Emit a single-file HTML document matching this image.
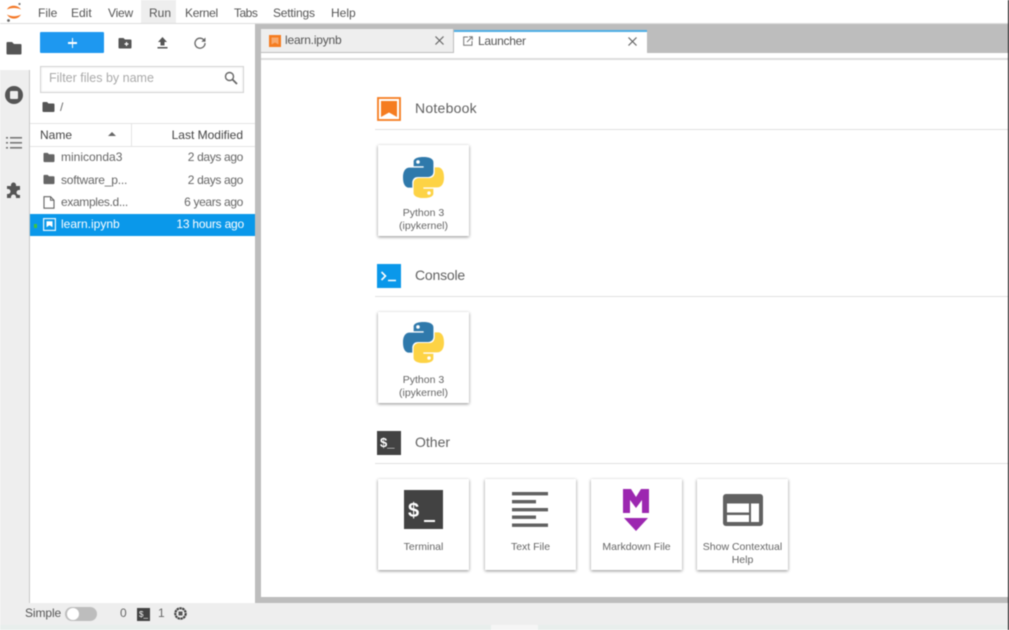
<!DOCTYPE html>
<html><head><meta charset="utf-8"><style>
html,body{margin:0;padding:0;background:#fff}
body{width:1009px;height:630px;position:relative;overflow:hidden;font-family:"Liberation Sans",sans-serif;color:#555}
.a{position:absolute}
.t{position:absolute;white-space:nowrap;font-size:12px;line-height:14px}
.d{letter-spacing:-.35px}
.card{position:absolute;width:91px;height:91px;background:#fff;box-shadow:0 1px 3px rgba(0,0,0,.45)}
.cl{position:absolute;left:0;width:91px;text-align:center;font-size:10.5px;line-height:13px;color:#666}
.hr{position:absolute;left:375px;width:633px;height:1px;background:#e0e0e0}
.h{position:absolute;left:415px;font-size:14px;line-height:18px;color:#616161}
svg{position:absolute;overflow:visible}
#w{position:absolute;left:0;top:0;width:1009px;height:630px;filter:blur(.45px)}
</style></head><body><div id="w">
<!-- menu -->
<div class="a" style="left:141px;top:0;width:35px;height:23px;background:#eee"></div>
<div class="a" style="left:0;top:23px;width:1009px;height:1px;background:#ddd"></div>
<svg style="left:5px;top:1px" width="18" height="22" viewBox="0 0 18 22"><path d="M2 8.500C4 3.500 13 3.500 16 8.500C12 6.500 6 6.500 2 8.500ZM2 13.500C5 19 13 19 16 13.500C12 15.800 6 15.800 2 13.500Z" fill="#f37726"/><circle cx="14.500" cy="3" r="1.100" fill="#777"/><circle cx="3.500" cy="19.500" r="1.400" fill="#666"/></svg>
<div class="t" style="left:38px;top:6px">File</div>
<div class="t" style="left:71px;top:6px">Edit</div>
<div class="t" style="left:108px;top:6px;letter-spacing:-.2px">View</div>
<div class="t" style="left:149px;top:6px">Run</div>
<div class="t" style="left:185px;top:6px;letter-spacing:-.3px">Kernel</div>
<div class="t" style="left:234px;top:6px;letter-spacing:-.5px">Tabs</div>
<div class="t" style="left:273px;top:6px;letter-spacing:-.2px">Settings</div>
<div class="t" style="left:331px;top:6px">Help</div>
<!-- sidebar -->
<div class="a" style="left:0;top:70px;width:29px;height:533px;background:#eee"></div>
<div class="a" style="left:29px;top:70px;width:1px;height:533px;background:#c8c8c8"></div>
<svg style="left:6px;top:41px" width="16" height="14" viewBox="0 0 16 14"><path d="M1.500 1h4.500l2 2h6.500a1 1 0 0 1 1 1v8.500a1 1 0 0 1-1 1h-13a1 1 0 0 1-1-1V2a1 1 0 0 1 1-1z" fill="#555"/></svg>
<svg style="left:5px;top:86px" width="18" height="18" viewBox="0 0 18 18"><circle cx="9" cy="9" r="9" fill="#555"/><rect x="5" y="5" width="8" height="8" rx="1" fill="#eee"/></svg>
<svg style="left:6px;top:136px" width="16" height="14" viewBox="0 0 16 14" fill="#777"><rect x="0" y="1" width="2" height="1.600"/><rect x="4" y="1" width="12" height="1.600"/><rect x="0" y="6" width="2" height="1.600"/><rect x="4" y="6" width="12" height="1.600"/><rect x="0" y="11" width="2" height="1.600"/><rect x="4" y="11" width="12" height="1.600"/></svg>
<svg style="left:6px;top:182px" width="16" height="17" viewBox="0 0 16 17"><path d="M5 3a2.500 2.500 0 0 1 5 0v1h4v4h-1a2.500 2.500 0 0 0 0 5h1v3H10v-1a2.500 2.500 0 0 0-5 0v1H1v-4h1a2.500 2.500 0 0 0 0-5H1V4h4z" fill="#555"/></svg>
<!-- file panel -->
<div class="a" style="left:40px;top:32px;width:64px;height:21px;background:#1e98f0;border-radius:1px"></div>
<div class="a" style="left:68px;top:42px;width:9px;height:1.500px;background:#fff"></div>
<div class="a" style="left:71.700px;top:38px;width:1.500px;height:9.500px;background:#fff"></div>
<svg style="left:118px;top:37px" width="14" height="12" viewBox="0 0 14 12"><path d="M1.500 1h4l1.500 1.500h5.500a1 1 0 0 1 1 1v7a1 1 0 0 1-1 1h-11a1 1 0 0 1-1-1v-8.500a1 1 0 0 1 1-1z" fill="#555"/><path d="M8.500 5v4M6.500 7h4" stroke="#fff" stroke-width="1.200"/></svg>
<svg style="left:157px;top:37px" width="11" height="12" viewBox="0 0 11 12"><path d="M5.500 0L10 5H7.500v3.500h-4V5H1zM.5 10h10v1.500H.5z" fill="#555"/></svg>
<svg style="left:194px;top:37px" width="12" height="12" viewBox="0 0 12 12"><path d="M10 3.200A5 5 0 1 0 11 6" fill="none" stroke="#666" stroke-width="1.300"/><path d="M11.500.5v4.200H7.300z" fill="#666"/></svg>
<div class="a" style="left:40px;top:66px;width:202px;height:25px;border:1px solid #d4d4d4;box-shadow:inset 0 0 2px rgba(0,0,0,.1)"></div>
<div class="t" style="left:49px;top:71px;font-size:12.500px;color:#aaa">Filter files by name</div>
<svg style="left:224px;top:71px" width="14" height="14" viewBox="0 0 14 14"><circle cx="5.500" cy="5.500" r="4" fill="none" stroke="#666" stroke-width="1.400"/><path d="M8.500 8.500L13 13" stroke="#666" stroke-width="1.800"/></svg>
<svg style="left:42px;top:101px" width="13" height="12" viewBox="0 0 13 12"><path d="M1.500 1h3.500l1.500 1.500h5a1 1 0 0 1 1 1v6.500a1 1 0 0 1-1 1h-10a1 1 0 0 1-1-1V2a1 1 0 0 1 1-1z" fill="#555"/></svg>
<div class="t" style="left:60px;top:100px;color:#666">/</div>
<div class="a" style="left:30px;top:123px;width:225px;height:1px;background:#e4e4e4"></div>
<div class="a" style="left:30px;top:146px;width:225px;height:1px;background:#e4e4e4"></div>
<div class="a" style="left:131px;top:124px;width:1px;height:22px;background:#e4e4e4"></div>
<div class="t" style="left:40px;top:128px;color:#444">Name</div>
<svg style="left:108px;top:132px" width="8" height="4" viewBox="0 0 8 4"><path d="M0 4L4 0L8 4z" fill="#666"/></svg>
<div class="t" style="right:766px;top:128px;color:#444">Last Modified</div>
<svg style="left:43px;top:152px" width="12" height="11" viewBox="0 0 13 12"><path d="M1.500 1h3.500l1.500 1.500h5a1 1 0 0 1 1 1v6.500a1 1 0 0 1-1 1h-10a1 1 0 0 1-1-1V2a1 1 0 0 1 1-1z" fill="#666"/></svg>
<div class="t" style="left:61px;top:150px;color:#666">miniconda3</div>
<div class="t d" style="right:766px;top:150px;color:#666">2 days ago</div>
<svg style="left:43px;top:174px" width="12" height="11" viewBox="0 0 13 12"><path d="M1.500 1h3.500l1.500 1.500h5a1 1 0 0 1 1 1v6.500a1 1 0 0 1-1 1h-10a1 1 0 0 1-1-1V2a1 1 0 0 1 1-1z" fill="#666"/></svg>
<div class="t" style="left:61px;top:173px;color:#666;letter-spacing:-.2px">software_p...</div>
<div class="t d" style="right:766px;top:173px;color:#666">2 days ago</div>
<svg style="left:43px;top:196px" width="12" height="13" viewBox="0 0 12 13"><path d="M1 .7h6.500L11 4.200v8H1z" fill="none" stroke="#666" stroke-width="1.100"/><path d="M7.500.7v3.500H11" fill="none" stroke="#666"/></svg>
<div class="t" style="left:61px;top:195px;color:#666;letter-spacing:-.35px">examples.d...</div>
<div class="t d" style="right:766px;top:195px;color:#666">6 years ago</div>
<div class="a" style="left:30px;top:214px;width:225px;height:22px;background:#0a98ea"></div>
<div class="a" style="left:34px;top:224px;width:3px;height:4px;background:#3fc43f"></div>
<svg style="left:43px;top:218px" width="13" height="13" viewBox="0 0 13 13"><rect x=".6" y=".6" width="11.800" height="11.800" fill="none" stroke="#fff" stroke-width="1.100"/><path d="M3.500 3.200h6v6L6.500 7.200 3.500 9.200z" fill="#fff"/></svg>
<div class="t" style="left:61px;top:217px;color:#fff">learn.ipynb</div>
<div class="t" style="right:765px;top:217px;color:#fff;letter-spacing:-.2px">13 hours ago</div>
<!-- main chrome -->
<div class="a" style="left:255px;top:24px;width:6px;height:579px;background:#bdbdbd"></div>
<div class="a" style="left:255px;top:24px;width:753px;height:29px;background:#bdbdbd"></div>
<div class="a" style="left:261px;top:29px;width:192px;height:23px;background:#eee"></div>
<div class="a" style="left:454px;top:30px;width:193px;height:24px;background:#fff"></div>
<div class="a" style="left:454px;top:30px;width:193px;height:2px;background:#4fb0e6"></div>
<div class="a" style="left:261px;top:53px;width:747px;height:5px;background:#fff"></div>
<div class="a" style="left:261px;top:58px;width:747px;height:2px;background:#dcdcdc"></div>
<svg style="left:269px;top:35px" width="12" height="12" viewBox="0 0 12 12"><rect width="12" height="12" fill="#f57c20"/><path d="M2.500 2.500h7v7L6 7.500 2.500 9.500z" fill="#fff" opacity=".35"/></svg>
<div class="t" style="left:285px;top:33px;color:#555;letter-spacing:-.2px">learn.ipynb</div>
<svg style="left:435px;top:36px" width="9" height="9" viewBox="0 0 9 9"><path d="M.5.500l8 8M8.500.500l-8 8" stroke="#666" stroke-width="1.200"/></svg>
<svg style="left:463px;top:36px" width="10" height="10" viewBox="0 0 10 10"><path d="M5 1H.7v8.300H9V5" fill="none" stroke="#777"/><path d="M4 6L9 1M6 .7h3.300V4" fill="none" stroke="#777"/></svg>
<div class="t" style="left:478px;top:34px;color:#555;letter-spacing:-.3px">Launcher</div>
<svg style="left:628px;top:37px" width="9" height="9" viewBox="0 0 9 9"><path d="M.5.500l8 8M8.500.500l-8 8" stroke="#666" stroke-width="1.200"/></svg>
<!-- launcher sections -->
<svg style="left:377px;top:97px" width="24" height="24" viewBox="0 0 24 24"><rect x="1" y="1" width="22" height="22" fill="none" stroke="#f57c20" stroke-width="1.800"/><path d="M4 4h16v16l-8-4.500-8 4.500z" fill="#f57c20"/></svg>
<div class="h" style="top:99px;letter-spacing:.25px">Notebook</div>
<div class="hr" style="top:129px"></div>
<div class="a" style="left:377px;top:264px;width:24px;height:24px;background:#0a98ea"></div>
<svg style="left:377px;top:264px" width="24" height="24" viewBox="0 0 24 24"><path d="M4.500 8l4 4-4 4" fill="none" stroke="#fff" stroke-width="1.600"/><path d="M11 16.500h8" stroke="#fff" stroke-width="1.500"/></svg>
<div class="h" style="top:266px;letter-spacing:-.2px">Console</div>
<div class="hr" style="top:296px"></div>
<div class="a" style="left:377px;top:431px;width:24px;height:24px;background:#424242"></div>
<div class="t" style="left:380px;top:436px;color:#fff;font-size:13px;font-weight:bold">$_</div>
<div class="h" style="top:433px">Other</div>
<div class="hr" style="top:463px"></div>
<!-- cards -->
<div class="card" style="left:378px;top:145px"><svg style="left:25px;top:12px" width="41" height="41" viewBox="0 0 110 110"><path d="M54.900 0C26.800 0 28.600 12.200 28.600 12.200v12.600h26.800v3.800H17.900S0 26.600 0 54.900c0 28.300 15.600 27.300 15.600 27.300h9.300V69.100s-.5-15.600 15.300-15.600h26.500s14.900.2 14.900-14.400V14.900S84 0 54.900 0zM40.200 8.500a4.800 4.800 0 1 1 0 9.600 4.800 4.800 0 0 1 0-9.600z" fill="#2f79ab"/><path transform="rotate(180 55 55)" d="M54.900 0C26.800 0 28.600 12.200 28.600 12.200v12.600h26.800v3.800H17.900S0 26.600 0 54.900c0 28.300 15.600 27.300 15.600 27.300h9.300V69.100s-.5-15.600 15.300-15.600h26.500s14.900.2 14.900-14.400V14.900S84 0 54.900 0zM40.200 8.500a4.800 4.800 0 1 1 0 9.600 4.800 4.800 0 0 1 0-9.600z" fill="#fdd345"/></svg><div class="cl" style="top:62px">Python 3<br>(ipykernel)</div></div>
<div class="card" style="left:378px;top:312px"><svg style="left:25px;top:10px" width="41" height="41" viewBox="0 0 110 110"><path d="M54.900 0C26.800 0 28.600 12.200 28.600 12.200v12.600h26.800v3.800H17.900S0 26.600 0 54.900c0 28.300 15.600 27.300 15.600 27.300h9.300V69.100s-.5-15.600 15.300-15.600h26.500s14.900.2 14.900-14.400V14.900S84 0 54.900 0zM40.200 8.500a4.800 4.800 0 1 1 0 9.600 4.800 4.800 0 0 1 0-9.600z" fill="#2f79ab"/><path transform="rotate(180 55 55)" d="M54.900 0C26.800 0 28.600 12.200 28.600 12.200v12.600h26.800v3.800H17.900S0 26.600 0 54.900c0 28.300 15.600 27.300 15.600 27.300h9.300V69.100s-.5-15.600 15.300-15.600h26.500s14.900.2 14.900-14.400V14.900S84 0 54.900 0zM40.200 8.500a4.800 4.800 0 1 1 0 9.600 4.800 4.800 0 0 1 0-9.600z" fill="#fdd345"/></svg><div class="cl" style="top:62px">Python 3<br>(ipykernel)</div></div>
<div class="card" style="left:378px;top:479px"><div class="a" style="left:26px;top:11px;width:39px;height:39px;background:#424242"></div><div class="t" style="left:30px;top:20px;color:#fff;font-size:20px;line-height:24px;font-weight:bold">$</div><div class="a" style="left:46px;top:41px;width:11px;height:2px;background:#fff"></div><div class="cl" style="top:62px">Terminal</div></div>
<div class="card" style="left:485px;top:479px"><svg style="left:27px;top:13px" width="36" height="36" viewBox="0 0 36 36" fill="#616161"><rect y="0" width="36" height="3.400"/><rect y="8" width="24" height="3.400"/><rect y="16" width="36" height="3.400"/><rect y="23.500" width="24" height="3.400"/><rect y="31.500" width="36" height="3.400"/></svg><div class="cl" style="top:62px">Text File</div></div>
<div class="card" style="left:591px;top:479px"><svg style="left:31px;top:9px" width="28" height="43" viewBox="0 0 28 43"><path d="M1 25V1h8l5 8 5-8h8v24h-7V12l-6 8-6-8v13z" fill="#9c27b0"/><path d="M2 30h24L14 43z" fill="#9c27b0"/></svg><div class="cl" style="top:62px">Markdown File</div></div>
<div class="card" style="left:697px;top:479px"><svg style="left:26px;top:15px" width="40" height="32" viewBox="0 0 40 32"><rect width="40" height="32" rx="3" fill="#616161"/><rect x="4" y="9.500" width="22" height="9" fill="#fff"/><rect x="4" y="21" width="22" height="7" fill="#fff"/><rect x="28" y="9.500" width="8" height="18.500" fill="#fff"/></svg><div class="cl" style="top:62px">Show Contextual<br>Help</div></div>
<!-- bottom -->
<div class="a" style="left:261px;top:597px;width:747px;height:6px;background:#bdbdbd"></div>
<div class="a" style="left:0;top:603px;width:1008px;height:22px;background:#eee"></div>
<div class="a" style="left:0;top:625px;width:1008px;height:5px;background:#e8eeec"></div>
<div class="a" style="left:491px;top:625px;width:47px;height:5px;background:#f5f5f5"></div>
<div class="t" style="left:25px;top:606px;color:#555;letter-spacing:-.1px">Simple</div>
<div class="a" style="left:65px;top:607px;width:32px;height:14px;border-radius:7px;background:#bdbdbd"></div>
<div class="a" style="left:67px;top:608px;width:12px;height:12px;border-radius:6px;background:#fff"></div>
<div class="t" style="left:120px;top:606px;color:#666">0</div>
<div class="a" style="left:137px;top:608px;width:13px;height:13px;background:#424242"></div>
<div class="t" style="left:139px;top:610px;color:#fff;font-size:8px;line-height:10px">$_</div>
<div class="t" style="left:158px;top:606px;color:#666">1</div>
<svg style="left:174px;top:607px" width="13" height="13" viewBox="0 0 13 13"><circle cx="6.500" cy="6.500" r="5.200" fill="none" stroke="#444" stroke-width="2.200" stroke-dasharray="2.400 .5"/><rect x="4.500" y="4.500" width="4" height="4" fill="#555"/></svg>
<!-- right edge -->
<div class="a" style="left:1008px;top:0;width:1px;height:630px;background:#000"></div>
</div></body></html>
